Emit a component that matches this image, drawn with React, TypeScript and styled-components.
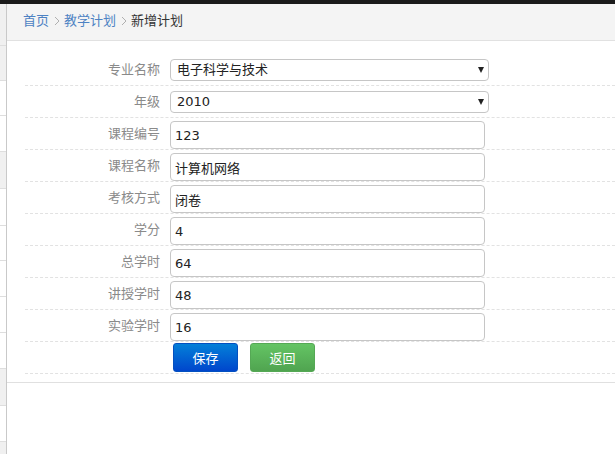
import React from "react";
import styled, { createGlobalStyle } from "styled-components";

const GlobalStyle = createGlobalStyle`
  html, body { margin: 0; padding: 0; background: #fff; }
  body { font-family: "DejaVu Sans", "Noto Sans CJK SC", sans-serif; font-size: 13px; color: #333; }
  * { box-sizing: border-box; }
`;

const Page = styled.div`
  width: 615px;
  height: 454px;
  overflow: hidden;
  display: flex;
  flex-direction: column;
`;

const TopBar = styled.div`
  height: 4px;
  background: #1b1b1b;
  flex: none;
`;

const Body = styled.div`
  flex: 1;
  display: flex;
  min-height: 0;
`;

const Sidebar = styled.div`
  width: 7px;
  flex: none;
  border-right: 1px solid #c9c9c9;
  display: flex;
  flex-direction: column;
  overflow: hidden;
`;

const SideItem = styled.div<{ $h: number; $gray?: boolean; $first?: boolean }>`
  height: ${(p) => p.$h}px;
  flex: none;
  background: ${(p) => (p.$gray ? "#f0f0f0" : "#fff")};
  border-top: ${(p) => (p.$first ? "none" : "1px solid #dedede")};
`;

const Main = styled.div`
  flex: 1;
  display: flex;
  flex-direction: column;
  min-width: 0;
`;

const Breadcrumb = styled.div`
  height: 37px;
  background: #f4f4f4;
  border-bottom: 1px solid #e1e1e1;
  display: flex;
  align-items: center;
  padding: 0 0 3px 16px;
  font-size: 13px;
  line-height: 16px;
`;

const Crumb = styled.a<{ $active?: boolean }>`
  color: ${(p) => (p.$active ? "#333" : "#4d82c3")};
  text-decoration: none;
`;

const Sep = styled.span`
  display: inline-flex;
  margin: 0 4px 0 5px;
  color: #b0b0b0;
`;

const FormArea = styled.div`
  padding: 13px 0 8px 18px;
  border-bottom: 1px solid #e0e0e0;
`;

const Row = styled.div`
  height: 32px;
  display: flex;
  align-items: center;
  padding-top: 3px;
  border-bottom: 1px dashed #e2e2e2;
`;

const Label = styled.label`
  width: 135px;
  text-align: right;
  color: #8a8a8a;
  font-size: 13px;
  line-height: 16px;
  margin: 0 10px 3px 0;
  flex: none;
`;

const SelectWrap = styled.div`
  position: relative;
  width: 319px;
  height: 22px;
  margin-bottom: 3px;
`;

const Select = styled.select`
  appearance: none;
  -webkit-appearance: none;
  width: 100%;
  height: 100%;
  border: 1px solid #c6c6c6;
  border-radius: 4px;
  background: #fff;
  padding: 0 0 0 6px;
  font-family: "DejaVu Sans", "Noto Sans CJK SC", sans-serif;
  font-size: 13px;
  color: #222;
  outline: none;
`;

const Arrow = styled.span`
  position: absolute;
  right: 5px;
  top: 8px;
  width: 0;
  height: 0;
  border-left: 3.5px solid transparent;
  border-right: 3.5px solid transparent;
  border-top: 6px solid #222;
  pointer-events: none;
`;

const Input = styled.input`
  width: 315px;
  height: 28px;
  border: 1px solid #c6c6c6;
  border-radius: 4px;
  padding: 0 4px;
  font-family: "DejaVu Sans", "Noto Sans CJK SC", sans-serif;
  font-size: 13px;
  color: #222;
  outline: none;
  background: #fff;
`;

const ButtonRow = styled.div`
  height: 32px;
  display: flex;
  align-items: flex-start;
  padding-top: 1px;
  padding-left: 148px;
  gap: 12px;
  border-bottom: 1px dashed #e2e2e2;
`;

const Button = styled.button<{ $variant: "primary" | "success" }>`
  width: 65px;
  height: 29px;
  border-radius: 3px;
  font-family: "DejaVu Sans", "Noto Sans CJK SC", sans-serif;
  font-size: 13px;
  color: #fff;
  cursor: pointer;
  border: 1px solid ${(p) => (p.$variant === "primary" ? "#0450c0" : "#55a855")};
  background: ${(p) =>
    p.$variant === "primary"
      ? "linear-gradient(to bottom, #0480d8, #0046cc)"
      : "linear-gradient(to bottom, #64c464, #50a450)"};
`;

const sideItems: { h: number; gray?: boolean }[] = [
  { h: 41, gray: true },
  { h: 35, gray: true },
  { h: 35 },
  { h: 36 },
  { h: 37, gray: true },
  { h: 37 },
  { h: 35 },
  { h: 36 },
  { h: 36 },
  { h: 36 },
  { h: 37, gray: true },
  { h: 36 },
  { h: 36, gray: true },
];

const fields: { label: string; value: string }[] = [
  { label: "课程编号", value: "123" },
  { label: "课程名称", value: "计算机网络" },
  { label: "考核方式", value: "闭卷" },
  { label: "学分", value: "4" },
  { label: "总学时", value: "64" },
  { label: "讲授学时", value: "48" },
  { label: "实验学时", value: "16" },
];

const Chevron = () => (
  <Sep>
    <svg width="6" height="10" viewBox="0 0 6 10">
      <polyline points="1,1 5,5 1,9" fill="none" stroke="currentColor" strokeWidth="1" />
    </svg>
  </Sep>
);

export default function App() {
  return (
    <>
      <GlobalStyle />
      <Page>
        <TopBar />
        <Body>
          <Sidebar>
            {sideItems.map((s, i) => (
              <SideItem key={i} $h={s.h} $gray={s.gray} $first={i === 0} />
            ))}
          </Sidebar>
          <Main>
            <Breadcrumb>
              <Crumb href="#">首页</Crumb>
              <Chevron />
              <Crumb href="#">教学计划</Crumb>
              <Chevron />
              <Crumb $active>新增计划</Crumb>
            </Breadcrumb>
            <FormArea>
              <Row>
                <Label>专业名称</Label>
                <SelectWrap>
                  <Select defaultValue="电子科学与技术">
                    <option>电子科学与技术</option>
                  </Select>
                  <Arrow />
                </SelectWrap>
              </Row>
              <Row>
                <Label>年级</Label>
                <SelectWrap>
                  <Select defaultValue="2010">
                    <option>2010</option>
                  </Select>
                  <Arrow />
                </SelectWrap>
              </Row>
              {fields.map((f) => (
                <Row key={f.label}>
                  <Label>{f.label}</Label>
                  <Input defaultValue={f.value} />
                </Row>
              ))}
              <ButtonRow>
                <Button $variant="primary">保存</Button>
                <Button $variant="success">返回</Button>
              </ButtonRow>
            </FormArea>
          </Main>
        </Body>
      </Page>
    </>
  );
}
